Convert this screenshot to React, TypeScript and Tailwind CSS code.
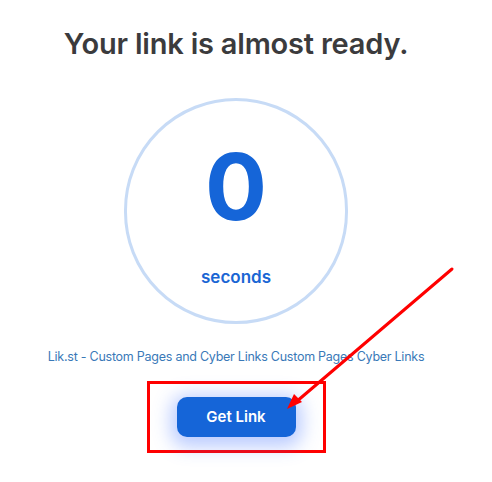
import React from "react";

export default function App() {
  return (
    <div className="relative w-[492px] h-[482px] bg-white overflow-hidden" style={{ fontFamily: "Inter, 'Noto Sans', sans-serif" }}>
      <div className="w-[472px] flex flex-col items-center pt-[25px]">
        <h1 className="text-[29px] leading-[37px] font-semibold text-[#3b3b3d] tracking-[-0.2px]">Your link is almost ready.</h1>
        <div className="mt-[36px] w-[224px] h-[226px] rounded-full border-[3px] border-[#c7dbf6] flex flex-col items-center">
          <div className="mt-[36px] text-[92px] leading-[100px] font-bold text-[#1565d8]">0</div>
          <div className="mt-[28px] text-[17px] leading-[24px] font-semibold text-[#1a66d4]">seconds</div>
        </div>
        <div className="mt-[24px] text-[12.5px] leading-[18px] text-[#3a79b8] tracking-[-0.25px]">Lik.st - Custom Pages and Cyber Links Custom Pages Cyber Links</div>
        <div className="mt-[15px] w-[179px] h-[72px] border-[3px] border-[#ff0000] flex items-center justify-center">
          <button className="w-[119px] h-[40px] rounded-[10px] bg-[#1565d8] text-white text-[15px] font-semibold shadow-[0_4px_18px_6px_rgba(60,110,255,0.35)]">Get Link</button>
        </div>
      </div>
      <svg className="absolute left-0 top-0" width="492" height="482" viewBox="0 0 492 482">
        <line x1="452" y1="269" x2="296" y2="402" stroke="#ff0000" strokeWidth="3" strokeLinecap="round" />
        <polygon points="287,409 294,394 302,402" fill="#ff0000" />
      </svg>
    </div>
  );
}
